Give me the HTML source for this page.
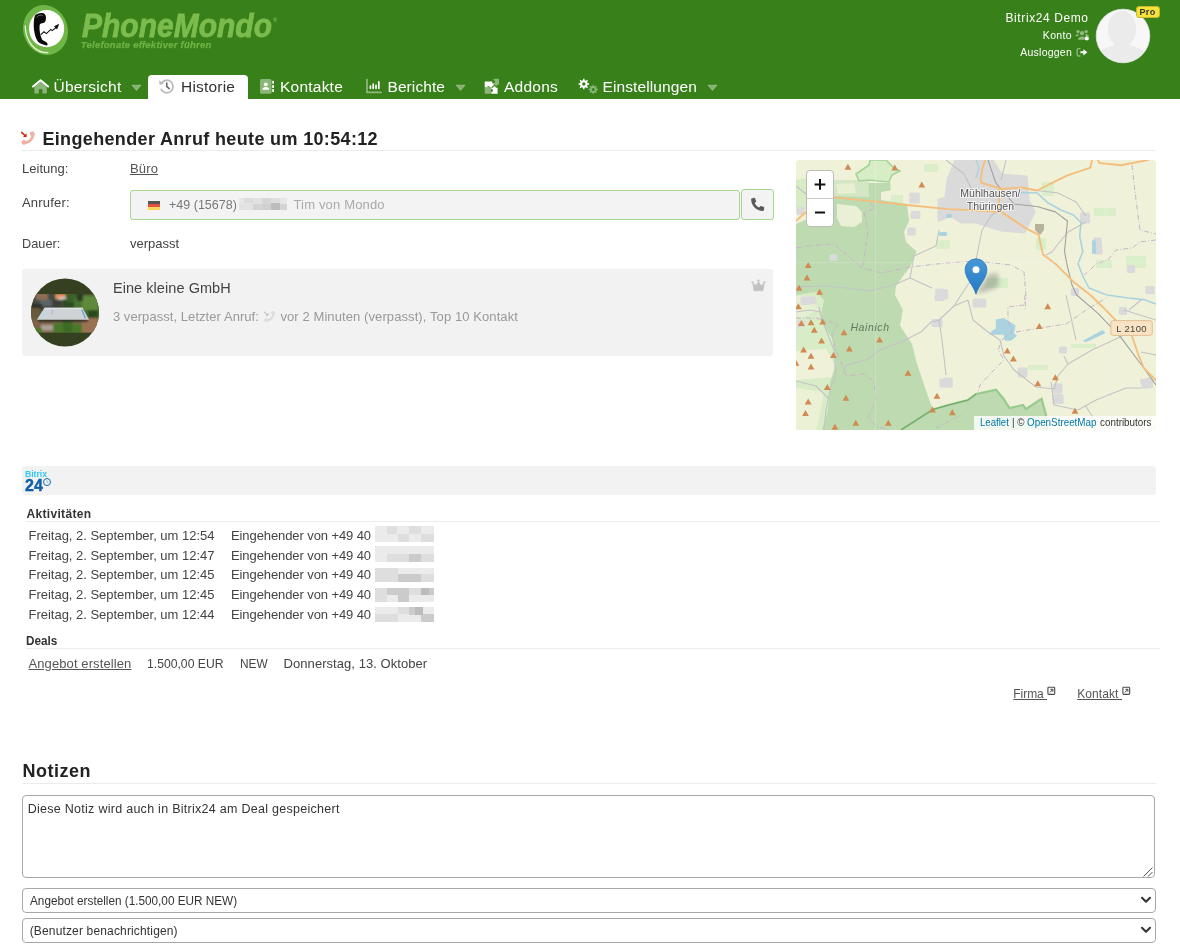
<!DOCTYPE html>
<html lang="de"><head><meta charset="utf-8"><title>PhoneMondo – Historie</title>
<style>
html,body{margin:0;padding:0;background:#fff;}
body{width:1180px;height:947px;position:relative;overflow:hidden;font-family:'Liberation Sans',sans-serif;}
.t{position:absolute;white-space:pre;transform-origin:0 50%;}
.abs{position:absolute;}
#hdr{position:absolute;left:0;top:0;width:1180px;height:99px;background:#388019;}
#tab{position:absolute;left:148px;top:75px;width:100px;height:24px;background:#fff;border-radius:4px 4px 0 0;}
.hr{position:absolute;height:1px;background:#ececec;}
.box{position:absolute;background:#f2f2f2;border-radius:3px;}

</style></head><body>
<div id="hdr"></div>
<div id="tab"></div>

<!-- logo -->
<svg class="abs" style="left:20px;top:2px" width="52" height="56" viewBox="0 0 52 56">
  <g transform="rotate(-18 25.500 28)">
    <ellipse cx="25.500" cy="28" rx="22.200" ry="25.200" fill="#6fb646"/>
  </g>
  <path d="M5.200 24Q5.600 36 12 43.500T28 50.600" fill="none" stroke="#e4f3d8" stroke-width="1.300" stroke-linecap="round"/>
  <ellipse cx="26.600" cy="26.600" rx="17.600" ry="18.600" fill="#fff"/>
  <g transform="translate(-2.600 0)">
  <path d="M17.500 13.500C20 10.500 26 10.200 27.600 12.400C29.400 15 28.600 19.600 26.600 20.800C24.400 21.600 22.600 21 22.200 23.600C21.800 28 22.600 33 24.600 37.400C26 39 28.600 39 29.800 41C30.600 42.600 30 43.600 29 43.400C26 42.800 22.400 41.600 20.600 39.800C16.600 34 15 22 17.500 13.500Z" fill="#0a0a0a"/>
  <path d="M19.400 15.500C20.600 13 24.600 12.400 25.600 14" fill="none" stroke="#777" stroke-width=".9"/>
  <path d="M23.400 32.600L26.600 29.800L29 31.600L33.400 27.400L34.800 28.600L40.600 24" fill="none" stroke="#111" stroke-width="1.100"/>
  <path d="M41.800 21.800L36.600 24.200L39.600 27.400Z" fill="#111"/>
  </g>
</svg>

<!-- nav icons -->
<svg class="abs" style="left:31px;top:78px" width="20" height="17" viewBox="0 0 20 17">
  <path d="M3.4 8.6L9.6 3.4L15.8 8.6V15A.6.6 0 0 1 15.2 15.6H11.4V11.2H7.8V15.6H4A.6.6 0 0 1 3.4 15Z" fill="#fff" fill-opacity=".42"/>
  <path d="M2 8.6L9.6 2.2L17.2 8.6" fill="none" stroke="#fff" stroke-width="1.9" stroke-linecap="round" stroke-linejoin="round"/>
</svg>
<svg class="abs" style="left:131px;top:84px" width="12" height="8" viewBox="0 0 12 8"><path d="M1 1.200H10L5.500 6.400Z" fill="#fff" fill-opacity=".38" stroke="#fff" stroke-opacity=".38" stroke-width=".8" stroke-linejoin="round"/></svg>
<svg class="abs" style="left:455px;top:84px" width="12" height="8" viewBox="0 0 12 8"><path d="M1 1.200H10L5.500 6.400Z" fill="#fff" fill-opacity=".38" stroke="#fff" stroke-opacity=".38" stroke-width=".8" stroke-linejoin="round"/></svg>
<svg class="abs" style="left:707px;top:84px" width="12" height="8" viewBox="0 0 12 8"><path d="M1 1.200H10L5.500 6.400Z" fill="#fff" fill-opacity=".38" stroke="#fff" stroke-opacity=".38" stroke-width=".8" stroke-linejoin="round"/></svg>
<!-- history -->
<svg class="abs" style="left:158px;top:78px" width="18" height="17" viewBox="0 0 18 17">
  <path d="M3.3 5.400A6.300 6.300 0 1 1 3.200 11.400" fill="none" stroke="#b9b9b9" stroke-width="1.7" stroke-linecap="round"/>
  <path d="M1 2.200L1.600 6.800L6 5.800Z" fill="#b9b9b9"/>
  <path d="M8.8 5V8.700L11.300 10.600" fill="none" stroke="#666" stroke-width="1.5" stroke-linecap="round" stroke-linejoin="round"/>
</svg>
<!-- address book -->
<svg class="abs" style="left:259px;top:78px" width="17" height="17" viewBox="0 0 17 17">
  <rect x="1" y="1" width="11.600" height="14.800" rx="1.600" fill="#fff" fill-opacity=".42"/>
  <rect x="13.200" y="2.800" width="1.800" height="3" rx=".5" fill="#fff"/><rect x="13.200" y="6.900" width="1.800" height="3" rx=".5" fill="#fff"/><rect x="13.200" y="11" width="1.800" height="3" rx=".5" fill="#fff"/>
  <circle cx="6.800" cy="6.300" r="1.900" fill="#fff"/><path d="M3.400 11.800A3.400 2.800 0 0 1 10.200 11.800Z" fill="#fff"/>
</svg>
<!-- chart -->
<svg class="abs" style="left:365px;top:78px" width="18" height="17" viewBox="0 0 18 17">
  <path d="M2 1.500V14.400H16" fill="none" stroke="#fff" stroke-opacity=".45" stroke-width="1.700" stroke-linecap="round" stroke-linejoin="round"/>
  <path d="M5.400 8V10.300M8.200 6V10.300M11 7.300V10.300M13.800 3.800V10.300" stroke="#fff" stroke-width="1.700" stroke-linecap="round"/>
</svg>
<!-- puzzle -->
<svg class="abs" style="left:483px;top:78px" width="18" height="17" viewBox="0 0 18 17">
  <path d="M1.700 3.500H9.200V5.300A1.300 1.300 0 1 1 9.200 7.800V9.600H6.600A1.250 1.250 0 1 0 4.200 9.600H1.700Z" fill="#fff"/>
  <path d="M1.700 10H4A1.250 1.250 0 1 1 6.400 10H7.900V15.700H1.700Z" fill="#fff" fill-opacity=".42"/>
  <path d="M8.300 9.800H10.200A1.300 1.300 0 1 1 12.700 9.800H14.600V15.700H8.300V13.600A1.200 1.200 0 1 0 8.300 11.400Z" fill="#fff"/>
  <path d="M10.600 .800H16V6.400H14.400A1.150 1.150 0 1 1 12.200 6.400H10.600V4.600A1.100 1.100 0 1 0 10.600 2.600Z" fill="#fff" fill-opacity=".42"/>
</svg>
<!-- cogs -->
<svg class="abs" style="left:578px;top:78px" width="21" height="17" viewBox="0 0 21 17">
  <path d="M9.61 5.16L11.06 5.36L11.06 6.64L9.61 6.84L9.08 8.10L9.98 9.26L9.06 10.18L7.90 9.28L6.64 9.81L6.44 11.26L5.16 11.26L4.96 9.81L3.70 9.28L2.54 10.18L1.62 9.26L2.52 8.10L1.99 6.84L0.54 6.64L0.54 5.36L1.99 5.16L2.52 3.90L1.62 2.74L2.54 1.82L3.70 2.72L4.96 2.19L5.16 0.74L6.44 0.74L6.64 2.19L7.90 2.72L9.06 1.82L9.98 2.74L9.08 3.90ZM7.50 6.00A1.7 1.7 0 1 0 4.10 6.00A1.7 1.7 0 1 0 7.50 6.00Z" fill="#fff" fill-rule="evenodd"/>
  <path d="M18.52 10.67L19.87 10.83L19.87 11.97L18.52 12.13L18.06 13.23L18.90 14.30L18.10 15.10L17.03 14.26L15.93 14.72L15.77 16.07L14.63 16.07L14.47 14.72L13.37 14.26L12.30 15.10L11.50 14.30L12.34 13.23L11.88 12.13L10.53 11.97L10.53 10.83L11.88 10.67L12.34 9.57L11.50 8.50L12.30 7.70L13.37 8.54L14.47 8.08L14.63 6.73L15.77 6.73L15.93 8.08L17.03 8.54L18.10 7.70L18.90 8.50L18.06 9.57ZM16.70 11.40A1.5 1.5 0 1 0 13.70 11.40A1.5 1.5 0 1 0 16.70 11.40Z" fill="#fff" fill-opacity=".42" fill-rule="evenodd"/>
</svg>

<!-- account icons -->
<svg class="abs" style="left:1075px;top:29px" width="15" height="12" viewBox="0 0 15 12">
  <g fill="#fff" fill-opacity=".45"><circle cx="3" cy="2.600" r="1.700"/><circle cx="11.200" cy="2.600" r="1.700"/><circle cx="7" cy="4.200" r="2.100"/>
  <path d="M.3 7.200A2.600 2 0 0 1 4.200 5.600A4 4 0 0 0 3 7.200ZM9.800 5.600A2.600 2 0 0 1 13.800 7.200H11A4 4 0 0 0 9.800 5.600ZM2.800 10.800A4.200 3.600 0 0 1 9.600 8.200V10.800Z"/></g>
  <circle cx="11.800" cy="9.300" r="1.300" fill="none" stroke="#fff" stroke-width="1.200"/><path d="M11.800 7V11.600M9.500 9.300H14.100M10.200 7.700L13.400 10.900M13.400 7.700L10.200 10.900" stroke="#fff" stroke-width=".8"/>
</svg>
<svg class="abs" style="left:1076px;top:47px" width="13" height="11" viewBox="0 0 13 11">
  <path d="M4 1.600H2.600A1.500 1.500 0 0 0 1.100 3.100V7.500A1.500 1.500 0 0 0 2.600 9H4" fill="none" stroke="#fff" stroke-opacity=".45" stroke-width="1.300" stroke-linecap="round"/>
  <path d="M4.400 4.300H7.400V2.200L11.400 5.300L7.400 8.400V6.300H4.400Z" fill="#fff"/>
</svg>
<!-- avatar -->
<svg class="abs" style="left:1094px;top:7px" width="58" height="58" viewBox="0 0 58 58">
  <defs><clipPath id="avc"><circle cx="29" cy="29" r="26"/></clipPath></defs>
  <circle cx="29" cy="29" r="26.800" fill="#f7f7f7" stroke="#e4e4e4" stroke-width=".8"/>
  <g clip-path="url(#avc)" fill="#ebebeb"><ellipse cx="28" cy="22" rx="14.200" ry="18"/><path d="M0 58C0 46 8 42 20 38V32H36V38C48 42 56 46 56 58Z"/></g>
</svg>
<div class="abs" style="left:1136px;top:6px;width:22px;height:10px;background:#f5e33b;border:1px solid #c9b92a;border-radius:3px;box-sizing:border-box;height:12px;width:24px"></div>

<!-- heading icon -->
<svg class="abs" style="left:20px;top:130px" width="16" height="16" viewBox="0 0 16 16">
  <path d="M13 3.600C13 9 9 13 3.600 13" fill="none" stroke="#f0b3a3" stroke-width="2.900" stroke-linecap="round"/><ellipse cx="12.300" cy="3.800" rx="2.300" ry="2.500" fill="#f0b3a3" transform="rotate(-15 12.300 3.800)"/><ellipse cx="3.900" cy="12.300" rx="2.500" ry="2.200" fill="#f0b3a3" transform="rotate(-15 3.900 12.300)"/>
  <path d="M1.600 2.400L5.200 5.600" stroke="#d12c08" stroke-width="1.500" stroke-linecap="round"/><path d="M6.700 3.300V7H3Z" fill="#d12c08"/>
</svg>
<div class="hr" style="left:22px;top:150px;width:1134px"></div>

<!-- caller input -->
<div class="abs" style="left:130px;top:190px;width:608px;height:28px;border:1px solid #a6d68f;border-radius:3px;background:#f3f3f3"></div>
<div class="abs" style="left:741px;top:189px;width:31px;height:29px;border:1px solid #a6d68f;border-radius:3px;background:#f3f3f3"></div>
<div class="abs" style="left:148px;top:201px;width:12px;height:9px;background:linear-gradient(#555 0 33.300%,#e5503c 33.300% 66.600%,#f8d458 66.600% 100%)"></div>
<svg class="abs" style="left:239px;top:198px" width="48" height="12" viewBox="0 0 48 12" shape-rendering="crispEdges">
  <rect width="48" height="12" fill="#e6e6e6"/>
  <rect x="5" y="0" width="9" height="5" fill="#dcdcdc"/><rect x="14" y="0" width="9" height="6" fill="#e2e2e2"/><rect x="23" y="0" width="9" height="6" fill="#d6d6d6"/><rect x="32" y="0" width="9" height="6" fill="#dedede"/>
  <rect x="0" y="6" width="14" height="6" fill="#e2e2e2"/><rect x="14" y="6" width="9" height="6" fill="#d4d4d4"/><rect x="23" y="6" width="9" height="6" fill="#d0d0d0"/><rect x="32" y="5" width="9" height="7" fill="#bdbdbd"/><rect x="41" y="6" width="7" height="6" fill="#d4d4d4"/>
</svg>
<svg class="abs" style="left:749px;top:196px" width="17" height="17" viewBox="0 0 17 17">
  <path d="M2.700 2.400L5.100 1.800A.8.800 0 0 1 6 2.300L7.100 5A.8.800 0 0 1 6.900 5.900L5.700 6.900C6.600 8.900 8.200 10.500 10.200 11.400L11.200 10.200A.8.800 0 0 1 12.100 10L14.800 11.100A.8.800 0 0 1 15.300 12L14.700 14.400A.8.800 0 0 1 13.900 15C7.400 15 2.100 9.700 2.100 3.200A.8.800 0 0 1 2.700 2.400Z" fill="#5a5a5a"/>
</svg>

<!-- contact card -->
<div class="box" style="left:22px;top:269px;width:751px;height:87px"></div>
<svg class="abs" style="left:30px;top:278px" width="70" height="70" viewBox="0 0 70 70">
  <defs><clipPath id="cc"><circle cx="35" cy="34.500" r="34"/></clipPath><clipPath id="cb"><rect x="0" y="16" width="70" height="38.800"/></clipPath>
  <filter id="cf" x="-10%" y="-10%" width="120%" height="120%"><feGaussianBlur stdDeviation=".9"/></filter></defs>
  <g clip-path="url(#cc)">
    <rect width="70" height="70" fill="#34401f"/>
    <g clip-path="url(#cb)"><g filter="url(#cf)">
      <rect x="-2" y="14" width="74" height="43" fill="#4a5a30"/>
      <rect x="-2" y="14" width="26" height="17" fill="#454a45"/>
      <rect x="6" y="15" width="12" height="7" fill="#8c6c52"/>
      <rect x="10" y="22" width="12" height="6" fill="#5d6468"/>
      <rect x="0" y="26" width="12" height="6" fill="#2a2e24"/>
      <rect x="22" y="20" width="10" height="10" fill="#3a3f38"/>
      <rect x="25.500" y="16" width="10" height="5.500" fill="#d9a070"/>
      <rect x="27" y="16.500" width="3" height="3" fill="#f08a40"/><rect x="31" y="16.500" width="3" height="3" fill="#f07a70"/><rect x="29" y="19.500" width="7" height="2" fill="#d8dde0"/>
      <rect x="33" y="21" width="14" height="9" fill="#2f4a22"/>
      <rect x="36" y="16" width="16" height="8" fill="#3a6226"/>
      <rect x="44" y="20" width="26" height="22" fill="#4a7330"/>
      <rect x="52" y="18" width="16" height="14" fill="#5f8a3a"/>
      <rect x="47" y="15" width="6" height="8" fill="#2c3a26"/>
      <rect x="58" y="32" width="10" height="10" fill="#2b4a1e"/>
      <rect x="-2" y="30" width="12" height="14" fill="#6a5a3e"/>
      <rect x="-2" y="42" width="74" height="14" fill="#7f6448"/>
      <rect x="52" y="40" width="16" height="15" fill="#9a7252"/>
      <rect x="11" y="47" width="14" height="5.500" fill="#aaa294"/>
      <rect x="23" y="45" width="12" height="11" fill="#48782c"/><rect x="33" y="43.500" width="10" height="12" fill="#3c6a26"/><rect x="42" y="46" width="10" height="10" fill="#48782c"/>
      <rect x="2" y="50" width="10" height="6" fill="#4a7a2c"/>
      <rect x="8" y="41" width="50" height="3" fill="#2a2a20"/>
    </g></g>
    <path d="M14.600 29.700H52.500L59.100 41.700H6.800Z" fill="#cfd3d6"/>
    <path d="M14.600 29.700H52.500L53.300 31.200H13.700Z" fill="#dfe2e4"/>
    <path d="M51 31.500L52.600 31.500L56.200 40.500L54.600 40.500Z" fill="#5f9ad8" opacity=".8"/>
    <path d="M22 32L23 32L22.400 36L21.400 36Z" fill="#7fb0e0" opacity=".7"/>
    <path d="M12 33H17V39H10Z" fill="#c2dbe6" opacity=".6"/>
  </g>
</svg>
<svg class="abs" style="left:751px;top:279px" width="15" height="13" viewBox="0 0 15 13">
  <path d="M3 11.800L1.800 4.200L5.200 6.600L7.500 2.200L9.800 6.600L13.200 4.200L12 11.800Z" fill="#c2c2c2" stroke="#c2c2c2" stroke-width=".6" stroke-linejoin="round"/>
  <circle cx="1.500" cy="3.300" r="1.100" fill="#c2c2c2"/><circle cx="7.500" cy="1.500" r="1.100" fill="#c2c2c2"/><circle cx="13.500" cy="3.300" r="1.100" fill="#c2c2c2"/>
</svg>
<svg class="abs" style="left:263px;top:310px" width="13" height="13" viewBox="0 0 16 16">
  <path d="M13 3.600C13 9 9 13 3.600 13" fill="none" stroke="#dedede" stroke-width="2.900" stroke-linecap="round"/><ellipse cx="12.300" cy="3.800" rx="2.300" ry="2.500" fill="#dedede" transform="rotate(-15 12.300 3.800)"/><ellipse cx="3.900" cy="12.300" rx="2.500" ry="2.200" fill="#dedede" transform="rotate(-15 3.900 12.300)"/>
  <path d="M1.600 2.400L5.200 5.600" stroke="#bdbdbd" stroke-width="1.300" stroke-linecap="round"/><path d="M6.700 3.300V7H3Z" fill="#bdbdbd"/>
</svg>

<!-- map -->
<div class="abs" id="map" style="left:796px;top:160px;width:360px;height:270px;border-radius:4px;background:#eff2d9;overflow:hidden;will-change:transform">
<svg width="360" height="270" viewBox="0 0 360 270" style="position:absolute;left:0;top:0">
<rect width="360" height="270" fill="#eff2d9"/>
<rect x="128" y="4" width="14" height="8" fill="#d5ecc4" opacity=".8"/>
<rect x="140" y="80" width="14" height="9" fill="#d5ecc4" opacity=".8"/>
<rect x="246" y="22" width="12" height="14" fill="#d5ecc4" opacity=".8"/>
<rect x="240" y="78" width="10" height="12" fill="#d5ecc4" opacity=".8"/>
<rect x="298" y="48" width="22" height="8" fill="#d5ecc4" opacity=".8"/>
<rect x="300" y="100" width="16" height="8" fill="#d5ecc4" opacity=".8"/>
<rect x="330" y="96" width="20" height="12" fill="#d5ecc4" opacity=".8"/>
<rect x="232" y="205" width="20" height="5" fill="#d5ecc4" opacity=".8"/>
<rect x="275" y="184" width="25" height="4" fill="#d5ecc4" opacity=".8"/>
<rect x="190" y="118" width="22" height="10" fill="#d5ecc4" opacity=".8"/>
<rect x="210" y="60" width="10" height="6" fill="#d5ecc4" opacity=".8"/>
<rect x="95" y="35" width="12" height="8" fill="#d5ecc4" opacity=".8"/>
<polygon points="0.0,64.0 9.0,60.0 38.0,56.0 38.0,20.0 72.0,20.0 72.0,23.0 94.5,23.0 94.5,30.5 85.0,32.0 85.0,40.0 111.0,44.0 113.0,61.0 108.0,72.0 110.0,82.0 120.5,91.5 117.5,99.0 114.0,107.0 107.0,116.0 100.0,126.0 99.0,135.0 107.0,150.0 104.0,165.5 116.0,184.0 120.5,202.0 126.6,220.4 134.0,242.0 137.0,249.0 152.5,245.0 172.0,240.0 180.0,234.0 200.0,229.6 207.5,238.7 213.5,248.0 227.0,245.0 230.0,249.0 245.6,238.7 250.0,254.7 252.0,270.0 0.0,270.0" fill="#bddab1"/>
<polygon points="0,20 10,18 10,50 0,52" fill="#d5ecc4"/>
<polygon points="38,20 72,20 73,37 38,36" fill="#d3e7c4"/>
<polygon points="40,24 58,23 60,33 42,34" fill="#e6efd2"/>
<polygon points="41,44 60,46 66,52 66,62 58,67 45,66 41,58" fill="#e9f0d5"/>
<polygon points="40,38 85,40 85,34 94,30 100,34 111,44 80,44 40,40" fill="#eff2d9" opacity=".0"/>
<polygon points="60,14 73,5 74,0 90,0 98,8 104,11 96,15 93,22 72,20 63,21" fill="#d6edc6" stroke="#a6d39a" stroke-width="1.6"/>
<polygon points="0,135 20,132 28,140 24,160 36,178 40,205 34,222 32,250 26,270 0,270" fill="#d9ecc8"/>
<polygon points="0,191 30,189 38,204 36,217 0,220" fill="#eff2d9"/>
<polygon points="0,228 28,232 24,254 20,270 0,270" fill="#eaf1d4"/>
<polygon points="0,136 14,136 22,150 6,158 0,156" fill="#e6efd2"/>
<path d="M105.0 270.0 L137.0 249.4 L152.5 245.0 L172.0 240.0 L180.0 234.0 L200.0 229.6 L207.5 238.7 L213.5 248.0 L227.0 245.0 L230.0 249.0 L245.6 238.7 L250.0 254.7 L251.0 270.0" fill="none" stroke="#8fc584" stroke-width="2.2" opacity=".85"/>
<path d="M105.0 270.0 L137.0 249.4 L152.5 245.0 L172.0 240.0 L180.0 234.0" fill="none" stroke="#5e9a5a" stroke-width=".8"/>
<polygon points="150.0,38.0 152.0,20.0 160.0,0.0 196.0,0.0 205.0,15.0 230.0,17.0 232.0,40.0 238.0,52.0 228.0,72.0 205.0,70.0 180.0,62.0 165.0,62.0 155.0,55.0 143.0,60.0 143.0,40.0" fill="#dadada" stroke="#dadada" stroke-width="3.2" stroke-linejoin="round"/>
<polygon points="114.8,34.0 122.2,34.0 122.2,42.0 114.8,42.0" fill="#dadada" stroke="#dadada" stroke-width="3.2" stroke-linejoin="round"/>
<polygon points="116.2,52.5 122.8,52.5 122.8,57.5 116.2,57.5" fill="#dadada" stroke="#dadada" stroke-width="3.2" stroke-linejoin="round"/>
<polygon points="112.8,69.2 118.2,69.2 118.2,73.8 112.8,73.8" fill="#dadada" stroke="#dadada" stroke-width="3.2" stroke-linejoin="round"/>
<polygon points="140.9,130.0 150.4,130.5 150.9,137.5 145.9,139.0 140.9,138.0" fill="#dadada" stroke="#dadada" stroke-width="3.2" stroke-linejoin="round"/>
<polygon points="178.2,140.0 188.8,140.0 188.8,146.0 178.2,146.0" fill="#dadada" stroke="#dadada" stroke-width="3.2" stroke-linejoin="round"/>
<polygon points="137.0,160.5 145.0,160.5 145.0,165.5 137.0,165.5" fill="#dadada" stroke="#dadada" stroke-width="3.2" stroke-linejoin="round"/>
<polygon points="276.5,129.5 281.5,129.5 281.5,134.5 276.5,134.5" fill="#dadada" stroke="#dadada" stroke-width="3.2" stroke-linejoin="round"/>
<polygon points="223.2,209.2 229.8,209.2 229.8,215.8 223.2,215.8" fill="#dadada" stroke="#dadada" stroke-width="3.2" stroke-linejoin="round"/>
<polygon points="258.2,225.2 264.8,225.2 264.8,231.8 258.2,231.8" fill="#dadada" stroke="#dadada" stroke-width="3.2" stroke-linejoin="round"/>
<polygon points="149.0,219.2 155.0,219.2 155.0,225.8 149.0,225.8" fill="#dadada" stroke="#dadada" stroke-width="3.2" stroke-linejoin="round"/>
<polygon points="345.5,220.6 355.5,218.6 355.5,226.6 347.5,227.1" fill="#dadada" stroke="#dadada" stroke-width="3.2" stroke-linejoin="round"/>
<polygon points="351.0,127.5 357.0,127.5 357.0,132.5 351.0,132.5" fill="#dadada" stroke="#dadada" stroke-width="3.2" stroke-linejoin="round"/>
<polygon points="6.0,138.0 18.0,138.0 19.0,142.0 11.0,143.5 6.0,143.5" fill="#dadada" stroke="#dadada" stroke-width="3.2" stroke-linejoin="round"/>
<polygon points="140.2,136.5 146.8,136.5 146.8,139.5 140.2,139.5" fill="#dadada" stroke="#dadada" stroke-width="3.2" stroke-linejoin="round"/>
<polygon points="145.0,220.0 155.0,220.0 155.0,226.0 145.0,226.0" fill="#dadada" stroke="#dadada" stroke-width="3.2" stroke-linejoin="round"/>
<polygon points="285.5,54.0 292.5,54.0 292.5,62.0 285.5,62.0" fill="#dadada" stroke="#dadada" stroke-width="3.2" stroke-linejoin="round"/>
<polygon points="299.0,79.0 304.0,79.0 305.0,93.0 300.0,93.0" fill="#dadada" stroke="#dadada" stroke-width="3.2" stroke-linejoin="round"/>
<polygon points="332.5,106.5 337.5,106.5 337.5,111.5 332.5,111.5" fill="#dadada" stroke="#dadada" stroke-width="3.2" stroke-linejoin="round"/>
<polygon points="2.2,48.5 6.8,48.5 6.8,53.5 2.2,53.5" fill="#dadada" stroke="#dadada" stroke-width="3.2" stroke-linejoin="round"/>
<polygon points="35.2,95.8 39.8,95.8 39.8,99.2 35.2,99.2" fill="#dadada" stroke="#dadada" stroke-width="3.2" stroke-linejoin="round"/>
<polygon points="258.0,235.5 266.0,235.5 266.0,242.5 258.0,242.5" fill="#dadada" stroke="#dadada" stroke-width="3.2" stroke-linejoin="round"/>
<polygon points="2.5,162.0 7.5,162.0 7.5,166.0 2.5,166.0" fill="#dadada" stroke="#dadada" stroke-width="3.2" stroke-linejoin="round"/>
<polygon points="324.5,148.5 329.5,148.5 329.5,153.5 324.5,153.5" fill="#dadada" stroke="#dadada" stroke-width="3.2" stroke-linejoin="round"/>
<polygon points="264.5,188.0 269.5,188.0 269.5,192.0 264.5,192.0" fill="#dadada" stroke="#dadada" stroke-width="3.2" stroke-linejoin="round"/>
<polygon points="239,64 248,64 248,70 244,75 239,70" fill="#b5b49a"/>
<polygon points="199.8,159.4 207.5,157.9 215.0,162.5 219.7,165.5 218.0,173.0 221.0,176.0 215.0,180.8 209.0,180.8 207.5,174.7 199.8,174.7 193.7,174.7 195.3,171.6 199.8,168.6" fill="#aad3df"/>
<polygon points="286.8,180.8 306.6,170.0 309.7,173.0 289.8,182.3" fill="#aad3df"/>
<path d="M224.0 32.8 L241.0 32.8 L251.7 42.7 L265.4 50.3 L277.6 55.0 L285.0 62.5 L283.7 76.3 L286.8 91.5 L282.0 103.7 L286.8 116.0 L292.9 128.0 L305.0 132.7 L311.0 135.0 L332.5 138.0 L347.8 139.6 L360.0 144.0" fill="none" stroke="#aad3df" stroke-width="1.6" stroke-linejoin="round"/>
<path d="M180.0 0.0 L183.0 8.0 L180.0 18.0" fill="none" stroke="#aad3df" stroke-width="1.4"/>
<rect x="150" y="54" width="6" height="4" fill="#aad3df" rx="1.5"/>
<rect x="143" y="72" width="8" height="4" fill="#aad3df" rx="1.5"/>
<rect x="296" y="80" width="4" height="14" fill="#aad3df" rx="1.5"/>
<path d="M0.0 88.0 L12.0 86.0 L38.0 84.0 L52.0 96.0 L66.0 108.0 L86.0 113.0 L114.0 107.0 L150.0 103.0 L180.0 101.0 L215.0 105.0 L228.0 112.0 L230.0 135.0 L229.0 150.0" stroke="#c9b3cb" stroke-width="1" fill="none" stroke-dasharray="5 2 1 2"/>
<path d="M74.0 44.0 L80.0 48.0 L68.0 52.0 L72.0 70.0 L68.0 100.0 L66.0 108.0" stroke="#c9b3cb" stroke-width="1" fill="none" stroke-dasharray="5 2 1 2"/>
<path d="M336.0 5.0 L340.0 40.0 L344.0 70.0 L360.0 74.0" stroke="#c9b3cb" stroke-width="1" fill="none" stroke-dasharray="5 2 1 2"/>
<path d="M360.0 80.0 L344.0 82.0 L336.0 88.0 L320.0 90.0 L312.0 100.0 L300.0 104.0 L292.0 112.0 L288.0 115.0" stroke="#c9b3cb" stroke-width="1" fill="none" stroke-dasharray="5 2 1 2"/>
<path d="M23.0 147.0 L26.0 160.0 L42.0 164.0 L36.0 175.0 L40.0 190.0 L46.0 205.0 L50.0 216.0 L68.0 214.0 L78.0 222.0 L80.0 240.0 L72.0 258.0 L80.0 266.0 L92.0 270.0" stroke="#c9b3cb" stroke-width="1" fill="none" stroke-dasharray="5 2 1 2"/>
<path d="M0.0 158.0 L20.0 158.0 L26.0 160.0" stroke="#c9b3cb" stroke-width="1" fill="none" stroke-dasharray="5 2 1 2"/>
<path d="M140.0 268.0 L165.0 255.0" stroke="#c9b3cb" stroke-width="1" fill="none" stroke-dasharray="5 2 1 2"/>
<path d="M229.0 135.0 L228.0 145.0 L212.0 147.0 L212.0 160.0 L216.0 172.0 L206.0 180.0 L202.0 190.0 L208.0 200.0 L196.0 212.0 L184.0 225.0 L182.0 232.0" stroke="#c9b3cb" stroke-width="1" fill="none" stroke-dasharray="5 2 1 2"/>
<path d="M220.0 172.0 L244.0 168.0 L270.0 164.0 L290.0 150.0 L312.0 137.0" stroke="#c9b3cb" stroke-width="1" fill="none" stroke-dasharray="5 2 1 2"/>
<path d="M0.0 152.0 L14.0 150.0 L24.0 152.0 L30.0 170.0 L38.0 190.0 L40.0 215.0 L34.0 230.0 L30.0 250.0 L28.0 270.0" stroke="#c3c3c6" stroke-width="1.1" fill="none" stroke-linejoin="round"/>
<path d="M0.0 221.0 L20.0 226.0 L32.0 238.0" stroke="#c3c3c6" stroke-width="1.1" fill="none" stroke-linejoin="round"/>
<path d="M48.0 210.0 L50.0 205.0 L70.0 200.0 L84.0 190.0 L105.0 182.0 L125.0 172.0 L135.0 162.0 L143.0 160.0 L158.0 146.0 L165.0 135.0 L175.0 120.0 L180.0 100.0 L186.0 70.0 L196.0 55.0 L203.0 50.0" stroke="#c3c3c6" stroke-width="1.1" fill="none" stroke-linejoin="round"/>
<path d="M0.0 127.0 L30.0 126.0 L50.0 128.0 L75.0 131.0 L100.0 124.0 L114.0 118.0 L136.0 128.0" stroke="#c3c3c6" stroke-width="1.1" fill="none" stroke-linejoin="round"/>
<path d="M114.0 118.0 L118.0 96.0 L140.0 86.0 L143.0 70.0" stroke="#c3c3c6" stroke-width="1.1" fill="none" stroke-linejoin="round"/>
<path d="M143.0 160.0 L146.0 180.0 L150.0 215.0" stroke="#c3c3c6" stroke-width="1.1" fill="none" stroke-linejoin="round"/>
<path d="M158.0 146.0 L172.0 140.0 L177.0 160.0 L192.0 172.0 L204.0 180.0 L208.0 196.0 L218.0 210.0 L240.0 227.0 L258.0 229.0 L262.0 216.0 L272.0 204.0 L296.0 190.0 L322.0 178.0 L334.0 172.0" stroke="#c3c3c6" stroke-width="1.1" fill="none" stroke-linejoin="round"/>
<path d="M255.0 222.0 L258.0 245.0 L282.0 250.0 L300.0 240.0 L330.0 228.0 L346.0 228.0" stroke="#c3c3c6" stroke-width="1.1" fill="none" stroke-linejoin="round"/>
<path d="M270.0 135.0 L280.0 180.0" stroke="#c3c3c6" stroke-width="1.1" fill="none" stroke-linejoin="round"/>
<path d="M268.0 196.0 L272.0 204.0" stroke="#c3c3c6" stroke-width="1.1" fill="none" stroke-linejoin="round"/>
<path d="M289.0 245.0 L300.0 262.0" stroke="#c3c3c6" stroke-width="1.1" fill="none" stroke-linejoin="round"/>
<path d="M241.0 30.5 L262.0 33.0 L280.0 42.0 L290.0 56.0" stroke="#c3c3c6" stroke-width="1.1" fill="none" stroke-linejoin="round"/>
<path d="M290.0 62.0 L272.0 72.0 L262.0 84.0 L256.0 92.0 L250.0 95.0" stroke="#c3c3c6" stroke-width="1.1" fill="none" stroke-linejoin="round"/>
<path d="M0.0 26.0 L10.0 34.0" stroke="#c3c3c6" stroke-width="1.1" fill="none" stroke-linejoin="round"/>
<path d="M150.0 0.0 L168.0 14.0 L176.0 30.0" stroke="#c3c3c6" stroke-width="1.1" fill="none" stroke-linejoin="round"/>
<path d="M210.0 0.0 L205.0 20.0" stroke="#c3c3c6" stroke-width="1.1" fill="none" stroke-linejoin="round"/>
<path d="M328.0 150.0 L360.0 160.0" stroke="#c3c3c6" stroke-width="1.1" fill="none" stroke-linejoin="round"/>
<path d="M345.0 192.0 L360.0 195.0" stroke="#c3c3c6" stroke-width="1.1" fill="none" stroke-linejoin="round"/>
<path d="M333.0 150.0 L345.0 140.0" stroke="#c3c3c6" stroke-width="1.1" fill="none" stroke-linejoin="round"/>
<path d="M192.0 0.0 L199.8 22.9 L218.0 44.0 L241.0 46.5 L259.3 51.9 L271.5 61.0 L270.0 76.3 L268.5 91.5 L271.5 106.8 L276.0 125.0 L280.7 135.0 L302.0 153.3 L325.0 177.7 L347.8 208.0 L360.0 225.0" fill="none" stroke="#a0a0a0" stroke-width="1.1" stroke-linejoin="round"/>
<path d="M0.0 61.0 L10.0 52.0 L38.0 37.4 L73.0 40.9 L111.0 45.0 L152.5 49.1 L180.0 50.3 L203.0 52.0" stroke="#f4bf7d" stroke-width="1.9" fill="none" stroke-linejoin="round" stroke-linecap="round"/>
<path d="M189.0 0.0 L186.0 10.0 L184.6 19.8 L186.0 23.0 L206.0 29.0 L225.8 27.5 L241.0 30.5 L256.0 22.9 L271.5 15.3 L294.4 7.6 L296.0 0.0" stroke="#f4bf7d" stroke-width="1.9" fill="none" stroke-linejoin="round" stroke-linecap="round"/>
<path d="M302.0 0.0 L303.5 3.0 L325.0 5.3 L347.8 0.8 L352.0 0.0" stroke="#f4bf7d" stroke-width="1.9" fill="none" stroke-linejoin="round" stroke-linecap="round"/>
<path d="M203.0 29.0 L203.0 50.3 L207.5 53.4 L230.3 68.6 L242.5 74.7 L247.0 94.6 L259.3 103.7 L277.6 122.0 L294.4 135.0 L309.7 150.0 L317.3 157.9 L335.6 174.7 L341.7 193.0 L347.8 208.0 L360.0 220.4" stroke="#f4bf7d" stroke-width="1.9" fill="none" stroke-linejoin="round" stroke-linecap="round"/>
<path d="M79.5 0V270M309.8 0V270M0 102.4H360" stroke="#fff" stroke-opacity=".2" stroke-width="1" fill="none"/>
<polygon points="48.5,9.7 55.3,9.7 51.9,3.7" fill="#d08a52"/>
<polygon points="95.4,10.4 102.2,10.4 98.8,4.4" fill="#d08a52"/>
<polygon points="122.4,27.5 129.2,27.5 125.8,21.5" fill="#d08a52"/>
<polygon points="8.8,108.0 15.6,108.0 12.2,102.0" fill="#d08a52"/>
<polygon points="7.6,120.6 14.4,120.6 11.0,114.6" fill="#d08a52"/>
<polygon points="-0.4,130.8 6.4,130.8 3.0,124.8" fill="#d08a52"/>
<polygon points="20.2,134.8 27.0,134.8 23.6,128.8" fill="#d08a52"/>
<polygon points="-1.1,149.2 5.7,149.2 2.3,143.2" fill="#d08a52"/>
<polygon points="1.9,166.0 8.7,166.0 5.3,160.0" fill="#d08a52"/>
<polygon points="11.6,165.3 18.4,165.3 15.0,159.3" fill="#d08a52"/>
<polygon points="23.3,164.5 30.1,164.5 26.7,158.5" fill="#d08a52"/>
<polygon points="14.9,172.8 21.7,172.8 18.3,166.8" fill="#d08a52"/>
<polygon points="22.2,183.6 29.0,183.6 25.6,177.6" fill="#d08a52"/>
<polygon points="4.2,192.4 11.0,192.4 7.6,186.4" fill="#d08a52"/>
<polygon points="11.6,198.8 18.4,198.8 15.0,192.8" fill="#d08a52"/>
<polygon points="-3.4,205.8 3.4,205.8 0.0,199.8" fill="#d08a52"/>
<polygon points="11.6,209.5 18.4,209.5 15.0,203.5" fill="#d08a52"/>
<polygon points="34.0,198.0 40.8,198.0 37.4,192.0" fill="#d08a52"/>
<polygon points="44.6,175.2 51.4,175.2 48.0,169.2" fill="#d08a52"/>
<polygon points="50.0,191.5 56.8,191.5 53.4,185.5" fill="#d08a52"/>
<polygon points="80.2,182.5 87.0,182.5 83.6,176.5" fill="#d08a52"/>
<polygon points="27.9,230.1 34.7,230.1 31.3,224.1" fill="#d08a52"/>
<polygon points="46.6,240.8 53.4,240.8 50.0,234.8" fill="#d08a52"/>
<polygon points="8.8,244.6 15.6,244.6 12.2,238.6" fill="#d08a52"/>
<polygon points="6.1,256.0 12.9,256.0 9.5,250.0" fill="#d08a52"/>
<polygon points="108.6,215.8 115.4,215.8 112.0,209.8" fill="#d08a52"/>
<polygon points="137.6,238.8 144.4,238.8 141.0,232.8" fill="#d08a52"/>
<polygon points="133.1,252.5 139.9,252.5 136.5,246.5" fill="#d08a52"/>
<polygon points="152.9,255.2 159.7,255.2 156.3,249.2" fill="#d08a52"/>
<polygon points="56.4,265.8 63.2,265.8 59.8,259.8" fill="#d08a52"/>
<polygon points="88.9,265.8 95.7,265.8 92.3,259.8" fill="#d08a52"/>
<polygon points="35.5,269.8 42.3,269.8 38.9,263.8" fill="#d08a52"/>
<polygon points="248.3,149.2 255.1,149.2 251.7,143.2" fill="#d08a52"/>
<polygon points="239.9,169.1 246.7,169.1 243.3,163.1" fill="#d08a52"/>
<polygon points="207.9,193.5 214.7,193.5 211.3,187.5" fill="#d08a52"/>
<polygon points="214.0,201.6 220.8,201.6 217.4,195.6" fill="#d08a52"/>
<polygon points="255.9,220.2 262.7,220.2 259.3,214.2" fill="#d08a52"/>
<polygon points="238.4,226.3 245.2,226.3 241.8,220.3" fill="#d08a52"/>
<polygon points="275.6,253.8 282.4,253.8 279.0,247.8" fill="#d08a52"/>
<text x="194.4" y="37" font-size="10.5" text-anchor="middle" fill="#555" font-family="'Liberation Sans',sans-serif" paint-order="stroke" stroke="#fff" stroke-opacity=".7" stroke-width="2" stroke-linejoin="round">Mühlhausen/</text>
<text x="194.4" y="50" font-size="10.5" text-anchor="middle" fill="#555" font-family="'Liberation Sans',sans-serif" paint-order="stroke" stroke="#fff" stroke-opacity=".7" stroke-width="2" stroke-linejoin="round">Thüringen</text>
<text x="74" y="170.7" font-size="10.5" font-style="italic" text-anchor="middle" fill="#5d7a5e" font-family="'Liberation Sans',sans-serif" letter-spacing=".6">Hainich</text>
<rect x="314.8" y="160.6" width="41.5" height="14.8" rx="2.5" fill="#f8e3c5" stroke="#e2bf92" stroke-width="1"/>
<text x="335.6" y="171.8" font-size="9.5" text-anchor="middle" fill="#4a4238" font-family="'Liberation Sans',sans-serif" letter-spacing=".3">L 2100</text>
<defs><filter id="mb" x="-50%" y="-50%" width="200%" height="200%"><feGaussianBlur stdDeviation="2.2"/></filter><linearGradient id="mg" x1="0" y1="0" x2="0" y2="1"><stop offset="0" stop-color="#4798d6"/><stop offset="1" stop-color="#2379c6"/></linearGradient></defs>
<polygon points="180,134 186,124 193,114 201,113 203,119 202,127 192,131" fill="#666" opacity=".36" filter="url(#mb)"/>
<path d="M180 134.200C178 126 169.100 118.500 169.100 109.700A10.900 10.900 0 0 1 190.900 109.700C190.900 118.500 182 126 180 134.200Z" fill="url(#mg)" stroke="#2a72b4" stroke-width=".7"/>
<circle cx="180" cy="109.800" r="3.500" fill="#fff"/>
</svg>
<div class="abs" style="left:9.5px;top:9.5px;width:26px;height:55px;border:1.5px solid #bcbcb4;border-radius:4px;background:#fff">
  <div class="abs" style="left:0;top:27px;width:26px;height:1px;background:#ccc"></div>
  <svg class="abs" style="left:0;top:0" width="26" height="55" viewBox="0 0 26 55"><path d="M7.600 13.400H18.400M13 8V18.800M8 41.600H18" stroke="#111" stroke-width="2" fill="none"/></svg>
</div>
<div class="abs" style="left:178px;top:256px;width:182px;height:14px;background:rgba(255,255,255,.8)"></div>
</div>

<!-- bitrix section -->
<div class="box" style="left:22px;top:466px;width:1134px;height:29px"></div>
<svg class="abs" style="left:42px;top:477px" width="10" height="10" viewBox="0 0 10 10"><circle cx="5" cy="5" r="3.500" fill="none" stroke="#1c6cab" stroke-width="1"/><path d="M5 3.200V5.200H6.500" fill="none" stroke="#7cc4ee" stroke-width=".9"/></svg>
<div class="hr" style="left:26px;top:521px;width:1134px"></div>
<svg class="abs" style="left:375px;top:526px" width="60" height="98" viewBox="0 0 60 98" shape-rendering="crispEdges">
  <g fill="#ebebeb"><rect x="0" y="0" width="59" height="16"/><rect x="0" y="20" width="59" height="16"/><rect x="0" y="42" width="59" height="14"/><rect x="0" y="62" width="59" height="14"/><rect x="0" y="81" width="59" height="15"/></g>
  <g fill="#dedede"><rect x="12" y="0" width="10" height="8"/><rect x="34" y="0" width="12" height="8"/><rect x="23" y="8" width="11" height="8"/><rect x="46" y="8" width="13" height="8"/>
  <rect x="12" y="28" width="22" height="8"/><rect x="46" y="28" width="13" height="8"/><rect x="0" y="42" width="23" height="14"/><rect x="46" y="48" width="13" height="8"/>
  <rect x="0" y="62" width="12" height="14"/><rect x="34" y="62" width="12" height="7"/><rect x="0" y="88" width="23" height="8"/><rect x="23" y="81" width="11" height="7"/></g>
  <g fill="#cbcbcb"><rect x="34" y="28" width="12" height="8"/><rect x="23" y="48" width="23" height="8"/><rect x="12" y="62" width="22" height="7"/><rect x="46" y="62" width="13" height="7"/><rect x="23" y="69" width="11" height="7"/><rect x="34" y="81" width="12" height="8"/><rect x="46" y="88" width="13" height="8"/></g>
  <g fill="#bcbcbc"><rect x="46" y="62" width="8" height="7"/><rect x="40" y="81" width="8" height="8"/></g>
</svg>
<div class="hr" style="left:26px;top:648px;width:1134px"></div>
<svg class="abs" style="left:1047px;top:686px" width="9" height="10" viewBox="0 0 9 10"><rect x=".9" y="1.200" width="6.800" height="7.200" rx=".8" fill="#fff" stroke="#4a4a4a" stroke-width="1.100"/><path d="M2.900 6.500L5.700 3.500M3.500 3.300H5.900V5.700" fill="none" stroke="#444" stroke-width="1"/></svg>
<svg class="abs" style="left:1122px;top:686px" width="9" height="10" viewBox="0 0 9 10"><rect x=".9" y="1.200" width="6.800" height="7.200" rx=".8" fill="#fff" stroke="#4a4a4a" stroke-width="1.100"/><path d="M2.900 6.500L5.700 3.500M3.500 3.300H5.900V5.700" fill="none" stroke="#444" stroke-width="1"/></svg>

<!-- notes -->
<div class="hr" style="left:22px;top:783px;width:1134px"></div>
<div class="abs" style="left:22px;top:795px;width:1131px;height:81px;border:1px solid #a8a8a8;border-radius:4px;background:#fff"></div>
<svg class="abs" style="left:1142px;top:866px" width="12" height="12" viewBox="0 0 12 12"><path d="M1.500 10.500L10.500 1.500M6 10.500L10.500 6" stroke="#555" stroke-width="1" fill="none"/></svg>
<div class="abs" style="left:22px;top:888px;width:1132px;height:23px;border:1px solid #a8a8a8;border-radius:4px;background:#fff"></div>
<div class="abs" style="left:22px;top:918px;width:1132px;height:23px;border:1px solid #a8a8a8;border-radius:4px;background:#fff"></div>
<svg class="abs" style="left:1140px;top:895px" width="12" height="10" viewBox="0 0 12 10"><path d="M2 2.700L6 6.800L10 2.700" fill="none" stroke="#333" stroke-width="2" stroke-linecap="round" stroke-linejoin="round"/></svg>
<svg class="abs" style="left:1140px;top:925px" width="12" height="10" viewBox="0 0 12 10"><path d="M2 2.700L6 6.800L10 2.700" fill="none" stroke="#333" stroke-width="2" stroke-linecap="round" stroke-linejoin="round"/></svg>

<div id="texts" style="position:absolute;left:0;top:0;width:1180px;height:947px;will-change:transform">
<span class="t" style="left:81.5px;top:4.4px;font-size:33px;line-height:43px;color:#7cbc4e;font-weight:700;font-style:italic;transform:scaleX(0.9092);-webkit-text-stroke:.8px #7cbc4e;">PhoneMondo</span>
<span class="t" style="left:80.8px;top:39.3px;font-size:9.5px;line-height:12px;color:#6fb244;font-weight:700;font-style:italic;letter-spacing:0.237px;-webkit-text-stroke:.25px #6fb244;">Telefonate effektiver führen</span>
<span class="t" style="left:53.4px;top:77.4px;font-size:15.5px;line-height:20px;color:#fff;letter-spacing:0.292px;">Übersicht</span>
<span class="t" style="left:181.0px;top:77.4px;font-size:15.5px;line-height:20px;color:#333;letter-spacing:0.207px;">Historie</span>
<span class="t" style="left:280.0px;top:77.4px;font-size:15.5px;line-height:20px;color:#fff;letter-spacing:0.227px;">Kontakte</span>
<span class="t" style="left:387.5px;top:77.4px;font-size:15.5px;line-height:20px;color:#fff;letter-spacing:0.078px;">Berichte</span>
<span class="t" style="left:504.0px;top:77.4px;font-size:15.5px;line-height:20px;color:#fff;letter-spacing:0.237px;">Addons</span>
<span class="t" style="left:602.5px;top:77.4px;font-size:15.5px;line-height:20px;color:#fff;letter-spacing:0.109px;">Einstellungen</span>
<span class="t" style="left:1005.5px;top:9.6px;font-size:12px;line-height:16px;color:#fff;letter-spacing:0.595px;">Bitrix24 Demo</span>
<span class="t" style="left:1042.8px;top:28.4px;font-size:10.5px;line-height:14px;color:#fff;letter-spacing:0.349px;">Konto</span>
<span class="t" style="left:1020.3px;top:45.4px;font-size:10.5px;line-height:14px;color:#fff;letter-spacing:0.231px;">Ausloggen</span>
<span class="t" style="left:1139.5px;top:5.9px;font-size:9px;line-height:12px;color:#333;font-weight:700;letter-spacing:0.328px;">Pro</span>
<span class="t" style="left:42.4px;top:127.8px;font-size:18px;line-height:23px;color:#222;font-weight:700;letter-spacing:0.348px;">Eingehender Anruf heute um 10:54:12</span>
<span class="t" style="left:22.0px;top:159.8px;font-size:13px;line-height:17px;color:#444;letter-spacing:0.029px;">Leitung:</span>
<span class="t" style="left:130.0px;top:159.8px;font-size:13px;line-height:17px;color:#555;letter-spacing:0.133px;text-decoration:underline;">Büro</span>
<span class="t" style="left:22.0px;top:193.7px;font-size:13px;line-height:17px;color:#444;letter-spacing:0.194px;">Anrufer:</span>
<span class="t" style="left:168.9px;top:196.5px;font-size:12.5px;line-height:16px;color:#777;letter-spacing:0.030px;">+49 (15678)</span>
<span class="t" style="left:293.5px;top:196.2px;font-size:13px;line-height:17px;color:#aaa;letter-spacing:0.161px;">Tim von Mondo</span>
<span class="t" style="left:22.0px;top:235.4px;font-size:13px;line-height:17px;color:#444;transform:scaleX(0.9813);">Dauer:</span>
<span class="t" style="left:130.0px;top:235.4px;font-size:13px;line-height:17px;color:#444;letter-spacing:-0.018px;">verpasst</span>
<span class="t" style="left:112.9px;top:278.9px;font-size:14.5px;line-height:19px;color:#444;letter-spacing:0.065px;">Eine kleine GmbH</span>
<span class="t" style="left:112.9px;top:308.2px;font-size:13px;line-height:17px;color:#999;letter-spacing:0.060px;">3 verpasst, Letzter Anruf:</span>
<span class="t" style="left:280.4px;top:308.2px;font-size:13px;line-height:17px;color:#999;letter-spacing:0.093px;">vor 2 Minuten (verpasst), Top 10 Kontakt</span>
<span class="t" style="left:979.6px;top:414.7px;font-size:11px;line-height:14px;color:#0078a8;transform:scaleX(0.8749);">Leaflet</span>
<span class="t" style="left:1011.5px;top:414.7px;font-size:11px;line-height:14px;color:#333;transform:scaleX(0.8909);">| ©</span>
<span class="t" style="left:1027.0px;top:414.7px;font-size:11px;line-height:14px;color:#0078a8;transform:scaleX(0.8950);">OpenStreetMap</span>
<span class="t" style="left:1099.5px;top:414.7px;font-size:11px;line-height:14px;color:#333;transform:scaleX(0.8959);">contributors</span>
<span class="t" style="left:273.0px;top:16.2px;font-size:6px;line-height:8px;color:#7cbc4e;font-weight:700;letter-spacing:1.578px;">®</span>
<span class="t" style="left:25.0px;top:467.6px;font-size:9px;line-height:12px;color:#2fc6f6;font-weight:700;transform:scaleX(0.9559);">Bitrix</span>
<span class="t" style="left:25.0px;top:475.1px;font-size:16px;line-height:21px;color:#0f5ea6;font-weight:700;letter-spacing:0.002px;-webkit-text-stroke:.4px #0f5ea6;">24</span>
<span class="t" style="left:26.4px;top:505.9px;font-size:12px;line-height:16px;color:#333;font-weight:700;letter-spacing:0.340px;">Aktivitäten</span>
<span class="t" style="left:28.5px;top:526.9px;font-size:13px;line-height:17px;color:#444;letter-spacing:-0.017px;">Freitag, 2. September, um 12:54</span>
<span class="t" style="left:231.0px;top:526.9px;font-size:13px;line-height:17px;color:#444;letter-spacing:-0.093px;">Eingehender von +49 40</span>
<span class="t" style="left:28.5px;top:546.8px;font-size:13px;line-height:17px;color:#444;letter-spacing:-0.017px;">Freitag, 2. September, um 12:47</span>
<span class="t" style="left:231.0px;top:546.8px;font-size:13px;line-height:17px;color:#444;letter-spacing:-0.093px;">Eingehender von +49 40</span>
<span class="t" style="left:28.5px;top:566.4px;font-size:13px;line-height:17px;color:#444;letter-spacing:-0.017px;">Freitag, 2. September, um 12:45</span>
<span class="t" style="left:231.0px;top:566.4px;font-size:13px;line-height:17px;color:#444;letter-spacing:-0.093px;">Eingehender von +49 40</span>
<span class="t" style="left:28.5px;top:586.3px;font-size:13px;line-height:17px;color:#444;letter-spacing:-0.017px;">Freitag, 2. September, um 12:45</span>
<span class="t" style="left:231.0px;top:586.3px;font-size:13px;line-height:17px;color:#444;letter-spacing:-0.093px;">Eingehender von +49 40</span>
<span class="t" style="left:28.5px;top:605.8px;font-size:13px;line-height:17px;color:#444;letter-spacing:-0.017px;">Freitag, 2. September, um 12:44</span>
<span class="t" style="left:231.0px;top:605.8px;font-size:13px;line-height:17px;color:#444;letter-spacing:-0.093px;">Eingehender von +49 40</span>
<span class="t" style="left:26.4px;top:632.6px;font-size:12px;line-height:16px;color:#333;font-weight:700;transform:scaleX(0.9803);">Deals</span>
<span class="t" style="left:28.5px;top:655.0px;font-size:13px;line-height:17px;color:#555;letter-spacing:0.101px;text-decoration:underline;">Angebot erstellen</span>
<span class="t" style="left:147.3px;top:655.0px;font-size:13px;line-height:17px;color:#444;transform:scaleX(0.9367);">1.500,00 EUR</span>
<span class="t" style="left:240.0px;top:655.0px;font-size:13px;line-height:17px;color:#444;transform:scaleX(0.9129);">NEW</span>
<span class="t" style="left:283.6px;top:655.0px;font-size:13px;line-height:17px;color:#444;letter-spacing:0.054px;">Donnerstag, 13. Oktober</span>
<span class="t" style="left:1013.3px;top:685.5px;font-size:12px;line-height:16px;color:#555;letter-spacing:-0.050px;text-decoration:underline;">Firma </span>
<span class="t" style="left:1077.2px;top:685.5px;font-size:12px;line-height:16px;color:#555;letter-spacing:0.096px;text-decoration:underline;">Kontakt </span>
<span class="t" style="left:22.4px;top:760.2px;font-size:18px;line-height:23px;color:#222;font-weight:700;letter-spacing:0.514px;">Notizen</span>
<span class="t" style="left:27.7px;top:801.0px;font-size:12.5px;line-height:16px;color:#333;letter-spacing:0.276px;">Diese Notiz wird auch in Bitrix24 am Deal gespeichert</span>
<span class="t" style="left:29.7px;top:893.4px;font-size:12px;line-height:16px;color:#333;transform:scaleX(0.9795);">Angebot erstellen (1.500,00 EUR NEW)</span>
<span class="t" style="left:29.7px;top:922.8px;font-size:12px;line-height:16px;color:#333;letter-spacing:0.154px;">(Benutzer benachrichtigen)</span>
</div>

</body></html>
